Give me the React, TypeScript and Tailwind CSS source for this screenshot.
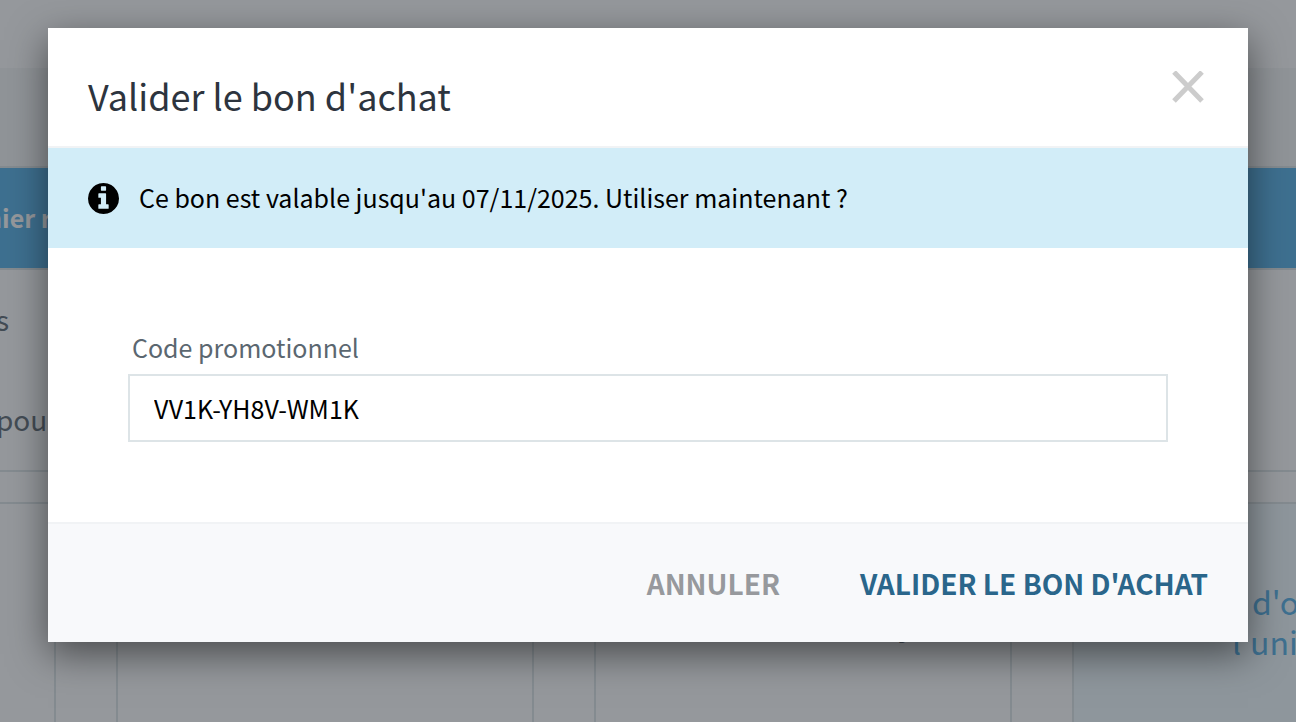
import { useState } from "react";

function InfoIcon() {
  return (
    <svg viewBox="0 128 1536 1536" className="w-[31px] h-[31px] shrink-0" fill="currentColor" aria-hidden="true">
      <path d="M1024 1376v-160q0-14-9-23t-23-9h-96v-512q0-14-9-23t-23-9h-320q-14 0-23 9t-9 23v160q0 14 9 23t23 9h96v320h-96q-14 0-23 9t-9 23v160q0 14 9 23t23 9h448q14 0 23-9t9-23zm-128-896v-160q0-14-9-23t-23-9h-192q-14 0-23 9t-9 23v160q0 14 9 23t23 9h192q14 0 23-9t9-23zm640 416q0 209-103 385.5t-279.5 279.5-385.5 103-385.5-103-279.5-279.5-103-385.5 103-385.5 279.5-279.5 385.5-103 385.5 103 279.5 279.5 103 385.5z" />
    </svg>
  );
}

function CloseIcon() {
  return (
    <svg viewBox="0 0 32 32" className="w-8 h-8" stroke="currentColor" strokeWidth="5" aria-hidden="true">
      <path d="M2 1L30 30M30 1L2 30" />
    </svg>
  );
}

// page derrière la fenêtre
function Background() {
  return (
    <div aria-hidden="true" className="min-h-screen bg-white text-[#5b6770]">
      <div className="h-[68px]" />
      <div className="h-[100px] bg-[#f5f6f7] border-b-2 border-[#dde4e7]" />
      <div className="h-[100px] bg-[#51aee6] flex items-center -ml-[14px]">
        <span className="text-[25px] font-bold text-white whitespace-nowrap">nier r</span>
      </div>
      <div className="h-[204px] border-y-2 border-[#dde4e7] text-[28px]">
        <p className="h-[100px] leading-[98px] -ml-[4px]">s</p>
        <p className="h-[100px] leading-[98px] -ml-[4px]">pou</p>
      </div>
      <div className="h-[30px]" />
      <div className="flex gap-[60px] -ml-[362px] text-[32px] leading-10">
        <div className="w-[418px] h-[320px] shrink-0 border-2 border-[#dde4e7]" />
        <div className="w-[418px] h-[320px] shrink-0 border-2 border-[#dde4e7]" />
        <div className="w-[418px] h-[320px] shrink-0 border-2 border-[#dde4e7] pt-[98px] pl-[302px]">
          <p>y</p>
        </div>
        <div className="w-[418px] h-[320px] shrink-0 border-2 border-[#dde4e7] bg-[#f1fafe] text-[#51aee6] pt-[77px] pl-[158px]">
          <p className="pl-5">d'o</p>
          <p>l'uni</p>
        </div>
      </div>
    </div>
  );
}

export default function App() {
  const [open, setOpen] = useState(true);
  const [code, setCode] = useState("VV1K-YH8V-WM1K");

  return (
    <div className="relative h-screen overflow-hidden font-['Noto_Sans_CJK_SC','Noto_Sans',sans-serif]">
      <Background />

      {open && (
        <div className="absolute inset-0 bg-[#2b3139]/50 px-12 pt-7">
          <form
            role="dialog"
            aria-modal="true"
            aria-labelledby="dialog-title"
            onSubmit={(e) => {
              e.preventDefault();
              setOpen(false);
            }}
            className="bg-white shadow-[0_12px_36px_rgba(0,0,0,0.5)]"
          >
            <header className="h-[120px] flex items-center justify-between px-10 border-b-2 border-[#f1f3f5]">
              <h1 id="dialog-title" className="text-4xl leading-10 pt-4 text-[#2d343e]">
                Valider le bon d'achat
              </h1>
              <button type="button" aria-label="Fermer" onClick={() => setOpen(false)} className="p-1 text-[#cccccc]">
                <CloseIcon />
              </button>
            </header>

            <div role="status" className="h-[100px] flex items-center gap-5 px-10 bg-[#d2edf8] text-black text-[25px]">
              <InfoIcon />
              <p>Ce bon est valable jusqu'au 07/11/2025. Utiliser maintenant ?</p>
            </div>

            <div className="p-20">
              <label htmlFor="code" className="block pl-1 pb-2 text-[25px] leading-[38px] text-[#5b6770]">
                Code promotionnel
              </label>
              <input
                id="code"
                value={code}
                onChange={(e) => setCode(e.target.value)}
                className="block w-full h-[68px] px-6 border-2 border-[#dde4e7] bg-white text-[25px] text-black outline-none"
              />
            </div>

            <footer className="h-[120px] flex items-center justify-end gap-20 px-10 bg-[#f8f9fb] border-t-2 border-[#f1f3f5] text-[28px]">
              <button type="button" onClick={() => setOpen(false)} className="font-semibold uppercase text-[#97999d]">
                Annuler
              </button>
              <button type="submit" className="font-semibold uppercase text-[#2a668b]">
                Valider le bon d'achat
              </button>
            </footer>
          </form>
        </div>
      )}
    </div>
  );
}
